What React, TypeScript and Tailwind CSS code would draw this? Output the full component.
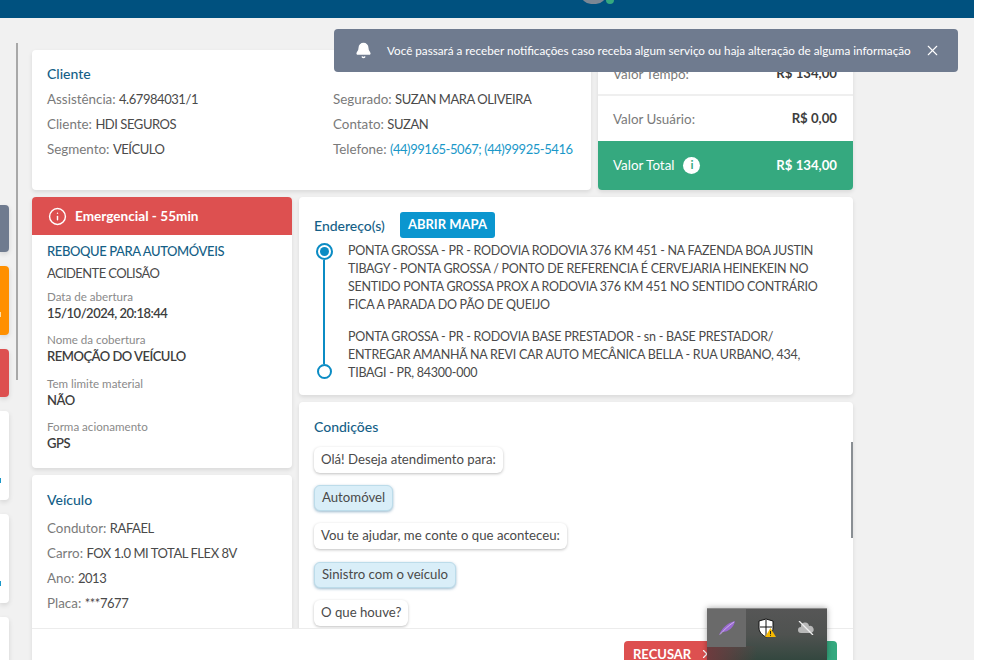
import { Bell, Info, X } from 'lucide-react';

const font = "font-['Lato','Noto_Sans',sans-serif]";

function Field({ label, value, link }: { label: string; value: string; link?: boolean }) {
  return (
    <div className="whitespace-nowrap text-[13.4px] leading-[25px] text-[#7a7a7a]">
      {label}: <span className={`text-[13px] tracking-[-0.45px] ${link ? 'text-[#1a98c9]' : 'text-[#4a4a4a]'}`}>{value}</span>
    </div>
  );
}

function Info2({ label, value }: { label: string; value: string }) {
  return (
    <div className="mt-[10.5px]">
      <div className="text-[11.6px] leading-[15px] text-[#8a8a8a]">{label}</div>
      <div className="text-[13px] leading-[18px] font-semibold tracking-[-0.5px] text-[#3d3d3d]">{value}</div>
    </div>
  );
}

function Bubble({ text, answer }: { text: string; answer?: boolean }) {
  return (
    <div
      className={`flex h-[26px] w-fit items-center rounded-[6px] px-[7px] text-[13.2px] text-[#4a4a4a] ${
        answer
          ? 'border border-[#bcdcea] bg-[#d9eef8] shadow-[0_1px_3px_rgba(0,80,130,0.4)]'
          : 'bg-white shadow-[0_1px_3px_rgba(0,0,0,0.25)]'
      }`}
    >
      {text}
    </div>
  );
}

export default function App() {
  return (
    <div className={`${font} relative h-[660px] w-[988px] overflow-hidden bg-white`}>
      <div className="relative h-[660px] w-[974px] overflow-hidden bg-[#f1f1f1]">
        <div className="relative h-[18px] bg-[#00517f]">
          <div className="absolute left-[581px] top-[-16px] h-[20px] w-[25px] rounded-full bg-[#7b8794]" />
          <div className="absolute left-[606px] top-[-4px] h-[8px] w-[8px] rounded-full bg-[#35a97f]" />
        </div>

        <div className="flex">
          {/* colunas da fila, cortadas na esquerda */}
          <div className="relative w-[32px] shrink-0">
            <div className="absolute left-[16px] top-[25px] h-[337px] w-[2px] bg-[#a8a8a8]" />
            <div className="absolute left-0 top-[187px] h-[47px] w-[9px] rounded-r-[4px] bg-[#6f7b8f] shadow-[0_2px_5px_rgba(0,0,0,0.12)]" />
            <div className="absolute left-0 top-[248px] h-[69px] w-[9px] rounded-r-[4px] bg-[#ff9000] shadow-[0_2px_5px_rgba(0,0,0,0.12)]">
              <div className="absolute left-0 top-[46px] h-[5px] w-[1px] bg-[#ffe0a8]" />
            </div>
            <div className="absolute left-0 top-[331px] h-[48px] w-[9px] rounded-r-[4px] bg-[#dd5050] shadow-[0_2px_5px_rgba(0,0,0,0.12)]" />
            <div className="absolute left-0 top-[393px] h-[89px] w-[9px] rounded-r-[4px] bg-white shadow-[0_2px_5px_rgba(0,0,0,0.12)]">
              <div className="absolute left-0 top-[67px] h-[5px] w-[1px] bg-[#1a98c9]" />
            </div>
            <div className="absolute left-0 top-[496px] h-[89px] w-[9px] rounded-r-[4px] bg-white shadow-[0_2px_5px_rgba(0,0,0,0.12)]">
              <div className="absolute left-0 top-[67px] h-[5px] w-[1px] bg-[#1a98c9]" />
            </div>
            <div className="absolute left-0 top-[599px] h-[60px] w-[9px] rounded-r-[4px] bg-white shadow-[0_2px_5px_rgba(0,0,0,0.12)]" />
          </div>

          <div className="mt-[32px] w-[821px] shrink-0">
            <div className="flex gap-[7px]">
              <div className="h-[140px] w-[559px] rounded-[4px] bg-white px-[15px] pt-[15px] shadow-[0_2px_4px_rgba(0,0,0,0.1)]">
                <div className="text-[14px] leading-[18px] font-medium text-[#155f87]">Cliente</div>
                <div className="mt-[4px] grid grid-cols-[286px_1fr]">
                  <div>
                    <Field label="Assistência" value="4.67984031/1" />
                    <Field label="Cliente" value="HDI SEGUROS" />
                    <Field label="Segmento" value="VEÍCULO" />
                  </div>
                  <div>
                    <Field label="Segurado" value="SUZAN MARA OLIVEIRA" />
                    <Field label="Contato" value="SUZAN" />
                    <Field label="Telefone" value="(44)99165-5067; (44)99925-5416" link />
                  </div>
                </div>
              </div>

              <div className="flex h-[140px] w-[255px] flex-col overflow-hidden rounded-[4px] bg-white shadow-[0_2px_4px_rgba(0,0,0,0.1)]">
                <div className="flex h-[46px] items-end justify-between border-b-2 border-[#efefef] pb-[10px] pl-[15px] pr-[16px] text-[13.4px]">
                  <span className="text-[#7a7a7a]">Valor Tempo:</span>
                  <span className="text-[13.2px] font-bold text-[#3d3d3d]">R$ 134,00</span>
                </div>
                <div className="flex h-[45px] items-center justify-between pl-[15px] pr-[16px] pt-[1px] text-[13.4px]">
                  <span className="text-[#7a7a7a]">Valor Usuário:</span>
                  <span className="text-[13.2px] font-bold text-[#3d3d3d]">R$ 0,00</span>
                </div>
                <div className="flex h-[49px] items-center justify-between bg-[#35a97f] pl-[15px] pr-[16px] text-[13.4px] text-white">
                  <span className="flex items-center gap-[9px]">
                    Valor Total
                    <span className="flex h-[17px] w-[17px] items-center justify-center rounded-full bg-white text-[12px] font-bold leading-none text-[#35a97f]">i</span>
                  </span>
                  <span className="text-[13.2px] font-bold">R$ 134,00</span>
                </div>
              </div>
            </div>

            <div className="mt-[7px] flex gap-[7px]">
              <div className="w-[260px] shrink-0">
                <div className="h-[271px] overflow-hidden rounded-[4px] bg-white shadow-[0_2px_4px_rgba(0,0,0,0.1)]">
                  <div className="flex h-[38px] items-center gap-[8px] bg-[#dd5050] px-[16px] text-[13.6px] font-bold text-white">
                    <Info className="h-[19px] w-[19px]" strokeWidth={1.8} />
                    Emergencial - 55min
                  </div>
                  <div className="px-[15px] pt-[7px]">
                    <div className="text-[13px] leading-[18px] font-medium tracking-[-0.4px] text-[#155f87]">REBOQUE PARA AUTOMÓVEIS</div>
                    <div className="mb-[-4px] mt-[4px] text-[13px] leading-[18px] tracking-[-0.6px] text-[#4a4a4a]">ACIDENTE COLISÃO</div>
                    <Info2 label="Data de abertura" value="15/10/2024, 20:18:44" />
                    <Info2 label="Nome da cobertura" value="REMOÇÃO DO VEÍCULO" />
                    <Info2 label="Tem limite material" value="NÃO" />
                    <Info2 label="Forma acionamento" value="GPS" />
                  </div>
                </div>
                <div className="mt-[7px] h-[200px] rounded-[4px] bg-white px-[15px] pt-[16px] shadow-[0_2px_4px_rgba(0,0,0,0.1)]">
                  <div className="text-[14px] leading-[18px] font-medium text-[#155f87]">Veículo</div>
                  <div className="mt-[7px]">
                    <Field label="Condutor" value="RAFAEL" />
                    <Field label="Carro" value="FOX 1.0 MI TOTAL FLEX 8V" />
                    <Field label="Ano" value="2013" />
                    <Field label="Placa" value="***7677" />
                  </div>
                </div>
              </div>

              <div className="w-[554px] shrink-0">
                <div className="h-[198px] rounded-[4px] bg-white px-[16px] pt-[15px] shadow-[0_2px_4px_rgba(0,0,0,0.1)]">
                  <div className="flex items-center gap-[15px]">
                    <span className="-ml-px text-[14px] font-medium text-[#155f87]">Endereço(s)</span>
                    <span className="flex h-[26px] items-center rounded-[3px] bg-[#0b96cf] px-[8px] text-[13px] font-bold text-white">ABRIR MAPA</span>
                  </div>
                  <div className="mt-[4px] flex gap-[15px]">
                    <div className="flex w-[18px] shrink-0 flex-col items-center pt-[1px]">
                      <div className="flex h-[17px] w-[17px] items-center justify-center rounded-full border-2 border-[#0b8cc4]">
                        <div className="h-[9px] w-[9px] rounded-full bg-[#0b8cc4]" />
                      </div>
                      <div className="h-[104px] w-[2px] bg-[#0b8cc4]" />
                      <div className="h-[15px] w-[15px] rounded-full border-2 border-[#0b8cc4]" />
                    </div>
                    <div className="w-[478px] text-[12.5px] leading-[18px] tracking-[-0.25px] text-[#4a4a4a]">
                      <p>PONTA GROSSA - PR - RODOVIA RODOVIA 376 KM 451 - NA FAZENDA BOA JUSTIN TIBAGY - PONTA GROSSA / PONTO DE REFERENCIA É CERVEJARIA HEINEKEIN NO SENTIDO PONTA GROSSA PROX A RODOVIA 376 KM 451 NO SENTIDO CONTRÁRIO FICA A PARADA DO PÃO DE QUEIJO</p>
                      <p className="mt-[13.5px]">PONTA GROSSA - PR - RODOVIA BASE PRESTADOR - sn - BASE PRESTADOR/ ENTREGAR AMANHÃ NA REVI CAR AUTO MECÂNICA BELLA - RUA URBANO, 434, TIBAGI - PR, 84300-000</p>
                    </div>
                  </div>
                </div>

                <div className="relative mt-[7px] h-[280px] rounded-[4px] bg-white px-[15px] pt-[16px] shadow-[0_2px_4px_rgba(0,0,0,0.1)]">
                  <div className="text-[14px] leading-[18px] font-medium text-[#155f87]">Condições</div>
                  <div className="mt-[10.5px] flex flex-col gap-[12.4px]">
                    <Bubble text="Olá! Deseja atendimento para:" />
                    <Bubble text="Automóvel" answer />
                    <Bubble text="Vou te ajudar, me conte o que aconteceu:" />
                    <Bubble text="Sinistro com o veículo" answer />
                    <Bubble text="O que houve?" />
                  </div>
                  <div className="absolute right-0 top-[40px] h-[96px] w-[2px] bg-[#8a8f94]" />
                </div>
              </div>
            </div>
          </div>
        </div>

        {/* rodapé fixo do modal */}
        <div className="absolute bottom-0 left-[32px] flex h-[32px] w-[821px] justify-end gap-[8px] border-t border-[#ececec] bg-white pr-[16px] pt-[12px]">
          <div className="flex h-[30px] w-[100px] items-start rounded-t-[4px] bg-[#dd5050] pl-[9px] pt-[6px] text-[13px] font-bold leading-[14px] text-white">
            RECUSAR
            <X className="ml-[9px] h-[14px] w-[14px] shrink-0" strokeWidth={2} />
          </div>
          <div className="h-[30px] w-[105px] rounded-t-[4px] bg-[#35a97f]" />
        </div>

        {/* aviso de notificações */}
        <div className="absolute left-[334px] top-[29px] flex h-[43px] w-[624px] items-center rounded-[4px] bg-[#6f7b8f] pl-[21px] text-[11.7px] text-white">
          <Bell className="h-[17px] w-[17px] fill-white" />
          <span className="ml-[15px] whitespace-nowrap">Você passará a receber notificações caso receba algum serviço ou haja alteração de alguma informação</span>
          <X className="absolute right-[17px] top-[13px] h-[17px] w-[17px]" strokeWidth={1.5} />
        </div>

        {/* bandeja do sistema por cima da página */}
        <div className="absolute left-[707px] top-[608px] flex h-[52px] w-[120px] border-t border-[#8a8a8a] bg-gradient-to-b from-[#565656] via-[#4f5250] to-[#33473f] shadow-[0_0_6px_rgba(0,0,0,0.35)]">
          <div className="absolute bottom-0 left-0 h-[14px] w-[50px] bg-gradient-to-r from-[#6e3b3e] to-transparent" />
          <div className="relative flex h-[38px] w-[39px] items-center justify-center bg-[#6a6a6a]">
            <svg width="18" height="18" viewBox="0 0 18 18">
              <path d="M1 16C4 9 9 4 17 2c-1 6-6 11-13 11l-3 3z" fill="#9a6ad2" />
              <path d="M2 15.500C6 11 10 7 16 3" stroke="#d8c2f2" strokeWidth="0.8" fill="none" />
            </svg>
          </div>
          <div className="relative flex h-[38px] w-[41px] items-center justify-center">
            <svg width="18" height="20" viewBox="0 0 18 20">
              <path d="M8 1l7 2v7c0 4-3 7-7 9-4-2-7-5-7-9V3z" fill="#fff" stroke="#111" />
              <path d="M8 2v16M2 9h12" stroke="#111" />
              <path d="M12.500 10l5.500 9H7z" fill="#f5b800" />
              <path d="M12.500 13v3M12.500 16.800v1" stroke="#222" />
            </svg>
          </div>
          <div className="relative flex h-[38px] w-[38px] items-center justify-center">
            <svg width="18" height="14" viewBox="0 0 18 14">
              <path d="M4 12a3 3 0 0 1 0-6 4 4 0 0 1 8-1 3.500 3.500 0 0 1 2 7z" fill="#b8b8b8" />
              <path d="M2 0l14 14" stroke="#eee" strokeWidth="1.3" />
            </svg>
          </div>
        </div>
      </div>
    </div>
  );
}
